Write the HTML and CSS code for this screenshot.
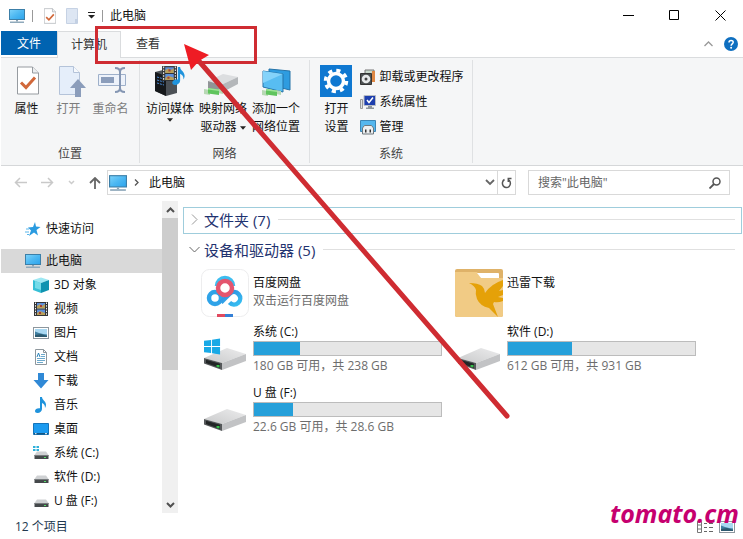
FILE: index.html
```html
<!DOCTYPE html>
<html lang="zh-CN">
<head>
    <meta charset="UTF-8">
    <meta name="viewport" content="width=device-width, initial-scale=1.0">
    <title>此电脑</title>
    <link rel="stylesheet" href="styles.css">
</head>
<body>
    <!-- Shared icons -->
    <svg class="icon-defs" aria-hidden="true">
        <defs>
            <linearGradient id="screen" x1="0" y1="0" x2="1" y2="1">
                <stop offset="0" stop-color="#7fd4fb"/>
                <stop offset="0.5" stop-color="#4db8f2"/>
                <stop offset="1" stop-color="#2ba3ec"/>
            </linearGradient>
            <linearGradient id="driveTop" x1="0" y1="1" x2="1" y2="0">
                <stop offset="0" stop-color="#c9cacb"/>
                <stop offset="1" stop-color="#ececed"/>
            </linearGradient>
            <linearGradient id="cloud" x1="0" y1="0" x2="1" y2="1">
                <stop offset="0" stop-color="#2f86dd"/>
                <stop offset="1" stop-color="#36c0f2"/>
            </linearGradient>
        </defs>
        <symbol id="i-pc" viewBox="0 0 16 16">
            <rect x="0.5" y="1.5" width="15" height="10" fill="url(#screen)" stroke="#3c7fa8"/>
            <path d="M7 12h2v1.500H7z" fill="#8ba3b5"/>
            <path d="M1 13.500h14v1.500H1z" fill="#8fa9bb"/>
        </symbol>
        <symbol id="i-drive" viewBox="0 0 48 48">
            <path d="M3 28 26 18 45 24 21 33z" fill="url(#driveTop)"/>
            <path d="M21 33 45 24V31L21 40z" fill="#c2c3c5"/>
            <path d="M3 28 21 33V40L3 33.500z" fill="#55585a"/>
            <path d="M5 29.800 19 33.800V38L5 33z" fill="#222526"/>
            <path d="M15.500 35h3v2.500l-3-.8z" fill="#35c04a"/>
        </symbol>
        <symbol id="i-win" viewBox="0 0 18 18">
            <path d="M0 3 7.500 2v6.500H0zM8.500 1.800 17 .5v8H8.500zM0 9.500h7.500V16L0 15zM8.500 9.500H17v8L8.500 16.200z" fill="#18a9e6"/>
        </symbol>
        <symbol id="i-sdrive" viewBox="0 0 16 16">
            <path d="M4 6.500h9l2.500 3.500h-14z" fill="#cfd1d3"/>
            <path d="M1.500 10h14v4h-14z" fill="#45494b"/>
            <path d="M1.500 10h14v1h-14z" fill="#777b7d"/>
            <path d="M11 12h2v1h-2z" fill="#56e069"/>
        </symbol>
        <symbol id="i-film" viewBox="0 0 16 16">
            <path d="M1 1h14v14H1z" fill="#343536"/>
            <path d="M4 2h8v5.500H4zM4 8.500h8V14H4z" fill="#5d8fdc"/>
            <path d="M4 5l3-2 2 2 3-2v4.500H4zM4 12l3-2 5 2v2H4z" fill="#b9a05a"/>
            <path d="M7 4h2v2H7zM6 11h2v2H6z" fill="#a33f37"/>
            <path d="M2.500 1.500v13M13.500 1.500v13" stroke="#f4f4f4" stroke-dasharray="1.500 1.200"/>
        </symbol>
        <symbol id="i-photo" viewBox="0 0 16 16">
            <rect x="0.500" y="2.500" width="15" height="11" fill="#fff" stroke="#8d979e"/>
            <path d="M2 4h12v8H2z" fill="#a9d8f2"/>
            <path d="M2 6.500l4 1.500 4 1 4 .5V12H2z" fill="#3f7fa1"/>
            <path d="M2 10l6-1 6 2v1H2z" fill="#2d5a70"/>
        </symbol>
        <symbol id="i-note" viewBox="0 0 16 16">
            <path d="M7 0h2c0 3 4 4 4 8 0 1-.5 2-1 3 0-3-1-4-3-5v6c0 2-2 4-4.500 4C2.800 16 2 15 2 14c0-1.700 2-3.200 5-2.800z" fill="#1f93dc"/>
        </symbol>
        <symbol id="i-check" viewBox="0 0 22 28">
            <path d="M.5.5h15l6 6v21H.5z" fill="#fff" stroke="#969ba0"/>
            <path d="M15.500.5v6h6" fill="#eceff1" stroke="#969ba0"/>
            <path d="M4 16l5 5 9-10" fill="none" stroke="#d1683a" stroke-width="3"/>
        </symbol>
        <symbol id="i-plug" viewBox="0 0 20 8">
            <path d="M0 2l6 1v5l-6-1zM14 2l5 1v4l-5-1z" fill="#b7d8b4"/>
            <path d="M4 1l11 1.500V8L4 6.500z" fill="#5fc45d"/>
            <path d="M4 1l11 1.500V4L4 2.500z" fill="#9be496"/>
        </symbol>
        <symbol id="i-caret" viewBox="0 0 7 4">
            <path d="M0 0h7L3.500 4z" fill="#222"/>
        </symbol>
    </svg>

    <div class="window">
        <header class="titlebar">
            <svg class="title-pc"><use href="#i-pc"/></svg>
            <span class="divider"></span>
            <button class="quick-btn" aria-label="属性"><svg width="12" height="16"><use href="#i-check"/></svg></button>
            <button class="quick-btn" aria-label="新建文件夹">
                <svg width="13" height="16" viewBox="0 0 13 16">
                    <path d="M.5.5h11v15H.5z" fill="#dde6f3" stroke="#c6d2e4"/>
                    <path d="M9 11h3v4H9z" fill="#c3d0e3"/>
                </svg>
            </button>
            <button class="quick-btn quick-more" aria-label="自定义快速访问工具栏">
                <svg width="7" height="7" viewBox="0 0 7 7"><path d="M0 0h7v1H0zM0 3h7L3.500 6.500z" fill="#222"/></svg>
            </button>
            <span class="divider"></span>
            <h1 class="title">此电脑</h1>
            <div class="window-btns">
                <button aria-label="最小化"><svg width="11" height="11"><path d="M0 5.500h11" stroke="#000"/></svg></button>
                <button aria-label="最大化"><svg width="11" height="11"><path d="M.5.5h9v9h-9z" fill="none" stroke="#000"/></svg></button>
                <button aria-label="关闭"><svg width="11" height="11"><path d="M.5.5l10 10M10.500.5l-10 10" stroke="#000"/></svg></button>
            </div>
        </header>

        <div class="tabs">
            <button class="tab tab-file">文件</button>
            <button class="tab tab-active">计算机</button>
            <button class="tab">查看</button>
            <div class="tab-tools">
                <button aria-label="折叠功能区"><svg width="9" height="6"><path d="M.5 5l4-4 4 4" fill="none" stroke="#999" stroke-width="1.300"/></svg></button>
                <button aria-label="帮助">
                    <svg width="14" height="14">
                        <circle cx="7" cy="7" r="7" fill="#0f6fc0"/>
                        <path d="M5 5.500C5 2.800 9.200 2.900 9.200 5.300 9.200 6.900 7.100 6.900 7.100 8.700" fill="none" stroke="#fff" stroke-width="1.500"/>
                        <circle cx="7.100" cy="10.800" r="1" fill="#fff"/>
                    </svg>
                </button>
            </div>
        </div>

        <div class="ribbon">
            <section class="group group-location">
                <div class="group-body">
                    <button class="big-btn">
                        <svg viewBox="0 0 32 32"><use href="#i-check" x="6" y="1" width="22" height="29"/></svg>
                        <span>属性</span>
                    </button>
                    <button class="big-btn" disabled>
                        <svg viewBox="0 0 32 32">
                            <path d="M6.500 1.500h14l6 6v22h-20z" fill="#e5eefa" stroke="#b4c3d9"/>
                            <path d="M20.500 1.500v6h6" fill="#f6f9fd" stroke="#b4c3d9"/>
                            <path d="M25 14l8 9h-5v9h-6v-9h-5z" fill="#8b9dbb"/>
                        </svg>
                        <span>打开</span>
                    </button>
                    <button class="big-btn" disabled>
                        <svg viewBox="0 0 32 32">
                            <path d="M3.500 9.500h27v11h-27z" fill="#edf2fa" stroke="#9eb0ca"/>
                            <path d="M6 12h13v6H6z" fill="#8b9dbb"/>
                            <path d="M20 3q5 0 5 4v16q0 4-5 4M30 3q-5 0-5 4v16q0 4 5 4" fill="none" stroke="#8496b3" stroke-width="2"/>
                        </svg>
                        <span>重命名</span>
                    </button>
                </div>
                <h2 class="group-label">位置</h2>
            </section>

            <section class="group group-network">
                <div class="group-body">
                    <button class="big-btn">
                        <svg viewBox="0 0 32 32">
                            <path d="M1 7l12-3 10 3v21l-11 3-11-5z" fill="#4c5156"/>
                            <path d="M1 7l11 4v20L1 26z" fill="#15181b"/>
                            <path d="M3 12l7 2M3 15l7 2M3 18l7 2" stroke="#4a8bd8" stroke-dasharray="2 1"/>
                            <use href="#i-film" x="7" y="0" width="17" height="17"/>
                            <use href="#i-note" x="16" y="0" width="18" height="22"/>
                        </svg>
                        <span>访问媒体</span>
                        <svg class="caret"><use href="#i-caret"/></svg>
                    </button>
                    <button class="big-btn">
                        <svg viewBox="0 0 32 32">
                            <path d="M1 16l15-7 15 3-17 8z" fill="#dcdee0"/>
                            <path d="M14 20l17-8v7l-17 9z" fill="#b4b7ba"/>
                            <path d="M1 16l13 4v8L1 23z" fill="#909497"/>
                            <use href="#i-plug" x="-3" y="22" width="20" height="8"/>
                        </svg>
                        <span>映射网络<br>驱动器 <svg class="caret"><use href="#i-caret"/></svg></span>
                    </button>
                    <button class="big-btn">
                        <svg viewBox="0 0 32 32">
                            <path d="M9 4l21 2v19l-21-5z" fill="#2e9ce0" stroke="#2573a8"/>
                            <path d="M3 6l20 3v18L3 22z" fill="#58bdf2" stroke="#2573a8"/>
                            <path d="M3 6l20 3L3 18z" fill="#84d3fa"/>
                            <use href="#i-plug" x="2" y="23" width="20" height="8"/>
                        </svg>
                        <span>添加一个<br>网络位置</span>
                    </button>
                </div>
                <h2 class="group-label">网络</h2>
            </section>

            <section class="group group-system">
                <div class="group-body">
                    <button class="big-btn">
                        <svg viewBox="0 0 32 32">
                            <path d="M0 0h32v32H0z" fill="#0f78d1"/>
                            <circle cx="16" cy="16" r="7.500" fill="none" stroke="#fff" stroke-width="3.500"/>
                            <circle cx="16" cy="16" r="10.500" fill="none" stroke="#fff" stroke-width="3.500" stroke-dasharray="4.123 4.123"/>
                        </svg>
                        <span>打开<br>设置</span>
                    </button>
                    <div class="small-btns">
                        <button class="small-btn">
                            <svg viewBox="0 0 16 16">
                                <path d="M5 1h9v11H5z" fill="#c9d9cc" stroke="#777"/>
                                <path d="M12 2h3v11h-3z" fill="#dd8744"/>
                                <path d="M.5 4.500h11v11H.5z" fill="#4c5052" stroke="#333"/>
                                <circle cx="6" cy="10" r="4.300" fill="#e7e9ea"/>
                                <circle cx="6" cy="10" r="1.500" fill="#444"/>
                            </svg>
                            <span>卸载或更改程序</span>
                        </button>
                        <button class="small-btn">
                            <svg viewBox="0 0 16 16">
                                <path d="M.5 5.500h2v9h-2z" fill="#dfe2e4" stroke="#999"/>
                                <path d="M4 1.500h11.500v10H4z" fill="#1e3fae" stroke="#b8bdc4"/>
                                <path d="M7 6l2 2.500 4-5" fill="none" stroke="#fff" stroke-width="1.500"/>
                                <path d="M8 12h4v1.500h2V15H6v-1.500h2z" fill="#8f969c"/>
                            </svg>
                            <span>系统属性</span>
                        </button>
                        <button class="small-btn">
                            <svg viewBox="0 0 16 16">
                                <path d="M.5 1.500h15v11H.5z" fill="#55b7ee" stroke="#3d86b5"/>
                                <path d="M2.500 9l2-2.500h7l2 2.500v6h-11z" fill="#eceff1" stroke="#6e777d"/>
                                <path d="M5 10.500h1.500v3H5zM9.500 10.500H11v3H9.500z" fill="#333"/>
                            </svg>
                            <span>管理</span>
                        </button>
                    </div>
                </div>
                <h2 class="group-label">系统</h2>
            </section>
        </div>

        <div class="navbar">
            <div class="nav-btns">
                <button aria-label="后退" disabled><svg width="13" height="11"><path d="M6 1L1.500 5.500 6 10M1.500 5.500H13" fill="none" stroke="#c9c9c9" stroke-width="1.500"/></svg></button>
                <button aria-label="前进" disabled><svg width="13" height="11"><path d="M7 1l4.500 4.500L7 10M11.500 5.500H0" fill="none" stroke="#c9c9c9" stroke-width="1.500"/></svg></button>
                <button aria-label="最近位置" disabled><svg width="7" height="5"><path d="M1 1l2.500 2.500L6 1" fill="none" stroke="#ccc" stroke-width="1.500"/></svg></button>
                <button aria-label="上移"><svg width="12" height="12"><path d="M1 6l5-5 5 5M6 1v11" fill="none" stroke="#666" stroke-width="1.800"/></svg></button>
            </div>
            <div class="address">
                <svg class="address-pc"><use href="#i-pc"/></svg>
                <svg class="address-sep" width="5" height="7"><path d="M1 .5l3 3-3 3" fill="none" stroke="#555" stroke-width="1.300"/></svg>
                <a class="address-path" href="#">此电脑</a>
                <button class="address-drop" aria-label="以前的位置"><svg width="10" height="7"><path d="M1 1l4 4 4-4" fill="none" stroke="#666" stroke-width="1.800"/></svg></button>
                <button class="address-refresh" aria-label="刷新">
                    <svg width="11" height="12"><path d="M3.500 2.500A4 4.300 0 1 0 8 3M10.500 1.500H7.300V5" fill="none" stroke="#555" stroke-width="1.500"/></svg>
                </button>
            </div>
            <label class="search">
                <input type="text" aria-label="搜索" placeholder='搜索"此电脑"'>
                <svg width="12" height="12"><circle cx="7.500" cy="4.500" r="3.500" fill="none" stroke="#555" stroke-width="1.500"/><path d="M5 7L.5 11.500" stroke="#555" stroke-width="1.800"/></svg>
            </label>
        </div>

        <div class="main">
            <aside class="sidebar">
                <nav class="tree">
                    <a class="tree-item tree-quick" href="#">
                        <svg viewBox="0 0 16 16"><path d="M10 1l1 4.500 4.500.5-4 3 1.500 5.500-4-3-5 3.500 2-5.500-3-3 5-.5z" fill="#2a9be0"/><path d="M1 8h3M0 11h4M2 13.500h2" stroke="#58b5ea"/></svg>快速访问
                    </a>
                    <a class="tree-item tree-selected" href="#"><svg><use href="#i-pc"/></svg>此电脑</a>
                    <a class="tree-item tree-child" href="#">
                        <svg viewBox="0 0 16 16"><path d="M0 3l8-2.500L16 3l-8 3z" fill="#9ee8f3"/><path d="M0 3l8 3v10l-8-3z" fill="#35bfd6"/><path d="M16 3L8 6v10l8-3z" fill="#0f93b0"/><path d="M2 4l6 2v7l-6-2z" fill="#74dbe9"/></svg>3D 对象
                    </a>
                    <a class="tree-item tree-child" href="#"><svg><use href="#i-film"/></svg>视频</a>
                    <a class="tree-item tree-child" href="#"><svg><use href="#i-photo"/></svg>图片</a>
                    <a class="tree-item tree-child" href="#">
                        <svg viewBox="0 0 16 16"><path d="M2.500.5h8l3 3v12h-11z" fill="#fff" stroke="#8e979d"/><path d="M10.500.5v3h3" fill="none" stroke="#8e979d"/><path d="M8 5.500h4M8 7.500h4M4 9.500h8M4 11.500h8M4 13.500h6" stroke="#6da9cc"/><path d="M4 8l1.500-4L7 8" fill="none" stroke="#2882b9"/></svg>文档
                    </a>
                    <a class="tree-item tree-child" href="#">
                        <svg viewBox="0 0 16 16"><path d="M5 0h6v7h4.500L8 15.500.5 7H5z" fill="#3089d6"/></svg>下载
                    </a>
                    <a class="tree-item tree-child" href="#"><svg><use href="#i-note"/></svg>音乐</a>
                    <a class="tree-item tree-child" href="#">
                        <svg viewBox="0 0 16 16"><path d="M.5 2.500h15v11H.5z" fill="#1c9bf0" stroke="#1574ba"/><path d="M1 12h14v1.500H1z" fill="#135784"/><path d="M2 12.700h1.500M12 12.700h2" stroke="#fff"/></svg>桌面
                    </a>
                    <a class="tree-item tree-child" href="#">
                        <svg viewBox="0 0 16 16"><use href="#i-sdrive"/><path d="M0 1h2.500v2H0zM3.500 1H6v2H3.500zM0 4h2.500v2H0zM3.500 4H6v2H3.500z" fill="#2fb0da"/></svg>系统 (C:)
                    </a>
                    <a class="tree-item tree-child" href="#"><svg><use href="#i-sdrive"/></svg>软件 (D:)</a>
                    <a class="tree-item tree-child" href="#"><svg><use href="#i-sdrive"/></svg>U 盘 (F:)</a>
                </nav>
                <div class="scrollbar">
                    <button aria-label="向上滚动"><svg width="9" height="6"><path d="M1 5l3.500-3.500L8 5" fill="none" stroke="#505050" stroke-width="2"/></svg></button>
                    <div class="scroll-thumb"></div>
                    <button aria-label="向下滚动"><svg width="9" height="6"><path d="M1 1l3.500 3.500L8 1" fill="none" stroke="#505050" stroke-width="2"/></svg></button>
                </div>
            </aside>

            <main class="content">
                <h2 class="section-head section-focus">
                    <svg width="11" height="11"><path d="M3 .5l5 5-5 5" fill="none" stroke="#999"/></svg>
                    文件夹 (7)
                </h2>
                <h2 class="section-head">
                    <svg width="11" height="11"><path d="M.5 3l5 5 5-5" fill="none" stroke="#666"/></svg>
                    设备和驱动器 (5)
                </h2>
                <div class="tiles">
                    <div class="tile tile-app">
                        <svg class="tile-icon" viewBox="0 0 48 48">
                            <rect x="0.500" y="0.500" width="47" height="47" rx="8" fill="#fff" stroke="#ededee"/>
                            <g fill="none" stroke-width="4.500">
                                <path d="M16 17a8 8 0 0 1 16 0" stroke="#3dbdf0"/>
                                <circle cx="14" cy="29" r="6" stroke="#2fa3e8"/>
                                <path d="M28.500 33.500a6.200 6.200 0 1 0 .5-9L20 33.500" stroke="url(#cloud)"/>
                                <circle cx="24" cy="19" r="7" stroke="#e4556e"/>
                            </g>
                            <path d="M16 45h8v3h-8z" fill="#e1495f"/>
                            <path d="M24 45h8v3h-8z" fill="#3480d6"/>
                        </svg>
                        <div class="tile-text">
                            <div class="tile-name">百度网盘</div>
                            <div class="tile-info">双击运行百度网盘</div>
                        </div>
                    </div>
                    <div class="tile tile-app">
                        <svg class="tile-icon" viewBox="0 0 48 48">
                            <rect width="48" height="48" rx="2" fill="#dfb268"/>
                            <path d="M0 3h22l4 6h22v37q0 2-2 2H2q-2 0-2-2z" fill="#f1cb85"/>
                            <path d="M22 4h21q1 0 1 1v4H26z" fill="#fff"/>
                            <path d="M14 14q9 0 13 3 3 3 3 7 6-9 18-13v6l-4 5 4-1v5l-5 2 5 1v3q-5 2-9 1l-1 2 5 13q-4-4-9-9-9-2-12-9-2-5-1-9-1-4-7-7z" fill="#e5a108"/>
                        </svg>
                        <div class="tile-text">
                            <div class="tile-name">迅雷下载</div>
                        </div>
                    </div>
                    <div class="tile">
                        <svg class="tile-icon" viewBox="0 0 48 48"><use href="#i-drive"/><use href="#i-win" x="3" y="8" width="17" height="17"/></svg>
                        <div class="tile-text">
                            <div class="tile-name">系统 (C:)</div>
                            <div class="bar"><div class="bar-fill" style="width: 24.4%"></div></div>
                            <div class="tile-info">180 GB 可用，共 238 GB</div>
                        </div>
                    </div>
                    <div class="tile">
                        <svg class="tile-icon" viewBox="0 0 48 48"><use href="#i-drive"/></svg>
                        <div class="tile-text">
                            <div class="tile-name">软件 (D:)</div>
                            <div class="bar"><div class="bar-fill" style="width: 34%"></div></div>
                            <div class="tile-info">612 GB 可用，共 931 GB</div>
                        </div>
                    </div>
                    <div class="tile">
                        <svg class="tile-icon" viewBox="0 0 48 48"><use href="#i-drive"/></svg>
                        <div class="tile-text">
                            <div class="tile-name">U 盘 (F:)</div>
                            <div class="bar"><div class="bar-fill" style="width: 21%"></div></div>
                            <div class="tile-info">22.6 GB 可用，共 28.6 GB</div>
                        </div>
                    </div>
                </div>
            </main>
        </div>

        <footer class="statusbar">
            <span>12 个项目</span>
            <div class="view-btns">
                <button aria-label="详细信息">
                    <svg width="16" height="12"><path d="M.5.5h4v11h-4zM.5 4h4M.5 8h4" fill="none" stroke="#777"/><path d="M7 2.500h3M12 2.500h4M7 6.500h3M12 6.500h4M7 10.500h3M12 10.500h4" stroke="#666"/></svg>
                </button>
                <button aria-label="大图标"><svg width="16" height="16"><use href="#i-photo"/></svg></button>
            </div>
        </footer>
    </div>

    <!-- Tutorial marks -->
    <svg class="marks" aria-hidden="true">
        <rect x="96.500" y="27.500" width="159" height="35" fill="none" stroke="#cf2c32" stroke-width="3"/>
        <path d="M198 60L507 416" stroke="#cf2c32" stroke-width="5" stroke-linecap="round"/>
        <path d="M184 44l25 11-10 6-8 9z" fill="#ee1c24"/>
    </svg>
    <div class="watermark">tomato.cm</div>
</body>
</html>
```
FILE: styles.css
```css
* {
    box-sizing: border-box;
}
body {
    margin: 0;
    font-family: "Open Sans", "Noto Sans CJK SC", sans-serif;
    font-size: 12px;
    line-height: 18px;
    color: #111;
    background: #fff;
    position: relative;
}
h1, h2 {
    margin: 0;
    font-size: 12px;
    font-weight: normal;
}
button {
    border: none;
    padding: 0;
    background: none;
    font: inherit;
    color: inherit;
}
a {
    color: inherit;
    text-decoration: none;
}
svg {
    display: block;
    flex-shrink: 0;
}
.icon-defs {
    position: absolute;
    width: 0;
    height: 0;
}
.window {
    min-height: 100vh;
    display: flex;
    flex-direction: column;
    padding-left: 1px;
}

/* title bar */
.titlebar {
    height: 31px;
    display: flex;
    align-items: center;
    gap: 7px;
    padding-left: 8px;
}
.title-pc {
    width: 16px;
    height: 16px;
}
.divider {
    width: 1px;
    height: 12px;
    background: #999;
}
.quick-btn {
    display: flex;
    justify-content: center;
    width: 14px;
    margin-left: 1px;
}
.title-pc + .divider {
    margin-right: 2px;
}
.quick-more {
    width: 8px;
}
.window-btns {
    margin-left: auto;
    display: flex;
    align-self: stretch;
}
.window-btns button {
    width: 46px;
    display: flex;
    align-items: center;
    justify-content: center;
}

/* tabs */
.tabs {
    height: 27px;
    display: flex;
    border-bottom: 1px solid #dadcde;
}
.tab {
    width: 54px;
    height: 24px;
    padding-top: 1px;
    color: #333;
}
.tab-file {
    width: 56px;
    background: #0063b1;
    color: #fff;
}
.tab-active {
    width: 64px;
    height: 27px;
    padding-bottom: 2px;
    background: #f5f6f7;
    border: 1px solid #dadcde;
    border-bottom: none;
}
.tab-tools {
    margin-left: auto;
    display: flex;
    align-items: center;
    gap: 11px;
    padding-right: 5px;
}

/* ribbon */
.ribbon {
    height: 108px;
    display: flex;
    padding: 2px 0;
    background: #f5f6f7;
    border-bottom: 1px solid #d5d7d9;
}
.group {
    display: flex;
    flex-direction: column;
    justify-content: space-between;
    border-right: 1px solid #dfe1e3;
}
.group-location {
    width: 139px;
}
.group-network {
    width: 170px;
}
.group-system {
    width: 163px;
}
.group-body {
    display: flex;
    justify-content: center;
    padding: 5px 3px 0 0;
}
.group-label {
    text-align: center;
    color: #444;
}
.big-btn {
    display: flex;
    flex-direction: column;
    align-items: center;
    width: 42px;
}
.group-network .big-btn {
    width: 53px;
}
.big-btn > svg:first-child {
    width: 32px;
    height: 32px;
    margin-bottom: 3px;
    overflow: visible;
}
.big-btn:disabled {
    color: #7c7c7c;
}
.caret {
    width: 6px;
    height: 4px;
}
.big-btn span .caret {
    display: inline-block;
    vertical-align: middle;
}
.small-btns {
    display: flex;
    flex-direction: column;
    gap: 7px;
    margin: 3px 0 0 3px;
}
.small-btn {
    display: flex;
    align-items: center;
    gap: 3px;
}
.small-btn svg {
    width: 16px;
    height: 16px;
}

/* address row */
.navbar {
    display: flex;
    align-items: center;
    height: 35px;
    padding: 0 13px 2px 0;
}
.nav-btns {
    width: 106px;
    display: flex;
    align-items: center;
    gap: 14px;
    padding-left: 13px;
}
.address {
    flex: 1;
    display: flex;
    align-items: center;
    height: 25px;
    border: 1px solid #d9d9d9;
}
.address-pc {
    width: 18px;
    height: 18px;
    margin: 0 7px 0 1px;
}
.address-path {
    margin-left: 10px;
}
.address-drop {
    margin-left: auto;
    padding: 0 2px;
}
.address-refresh {
    align-self: stretch;
    width: 18px;
    padding-left: 3px;
    border-left: 1px solid #d9d9d9;
}
.search {
    display: flex;
    align-items: center;
    width: 202px;
    height: 25px;
    margin-left: 12px;
    padding: 0 8px 0 9px;
    border: 1px solid #d9d9d9;
}
.search input {
    flex: 1;
    min-width: 0;
    padding: 0;
    border: none;
    outline: none;
    font: inherit;
}
.search input::placeholder {
    color: #666;
}

/* sidebar */
.main {
    flex: 1;
    display: flex;
}
.sidebar {
    display: flex;
    width: 177px;
}
.tree {
    flex: 1;
    padding-top: 16px;
}
.tree-item {
    display: flex;
    align-items: center;
    gap: 5px;
    height: 24px;
    padding-left: 24px;
}
.tree-item svg {
    width: 16px;
    height: 16px;
}
.tree-quick {
    margin-bottom: 8px;
}
.tree-selected {
    background: #d9d9d9;
}
.tree-child {
    padding-left: 32px;
}
.scrollbar {
    display: flex;
    flex-direction: column;
    width: 16px;
    background: #f0f0f0;
}
.scrollbar button {
    display: flex;
    align-items: center;
    justify-content: center;
    height: 17px;
}
.scroll-thumb {
    height: 152px;
    margin-bottom: auto;
    background: #cdcdcd;
}

/* content */
.content {
    flex: 1;
    padding: 6px 1px 0 5px;
}
.section-head {
    display: flex;
    align-items: center;
    gap: 4px;
    height: 27px;
    margin-bottom: 3px;
    padding: 0 6px 2px 5px;
    border: 1px solid transparent;
    font-size: 15px;
    color: #1f3370;
}
.section-head::after {
    content: "";
    flex: 1;
    height: 1px;
    margin-left: 4px;
    background: #e0e0e0;
}
.section-focus {
    border-color: #9fcddc;
}
.section-focus + .section-head {
    margin-bottom: -2px;
}
.tiles {
    display: grid;
    grid-template-columns: repeat(auto-fill, 254px);
    grid-auto-rows: 61px;
    padding-left: 18px;
}
.tile {
    display: flex;
    align-items: flex-start;
    gap: 4px;
}
.tile-icon {
    width: 48px;
    height: 48px;
    align-self: center;
}
.tile-text {
    width: 189px;
}
.tile-app .tile-text {
    padding-top: 12px;
}
.tile-info {
    color: #6d6d6d;
}
.bar {
    height: 15px;
    margin-bottom: 1px;
    background: #e6e6e6;
    border: 1px solid #bcbcbc;
}
.bar-fill {
    height: 100%;
    background: #26a0da;
}

/* status bar */
.statusbar {
    display: flex;
    align-items: center;
    justify-content: space-between;
    height: 26px;
    padding: 1px 8px 0 14px;
    color: #22384f;
}
.view-btns {
    display: flex;
    align-items: center;
    gap: 6px;
}

/* overlays */
.marks {
    position: absolute;
    top: 0;
    left: 0;
    width: 520px;
    height: 430px;
    pointer-events: none;
}
.watermark {
    position: absolute;
    right: 4px;
    bottom: 8px;
    font-size: 25px;
    line-height: 36px;
    font-weight: bold;
    font-style: italic;
    color: #c6006f;
}
```
